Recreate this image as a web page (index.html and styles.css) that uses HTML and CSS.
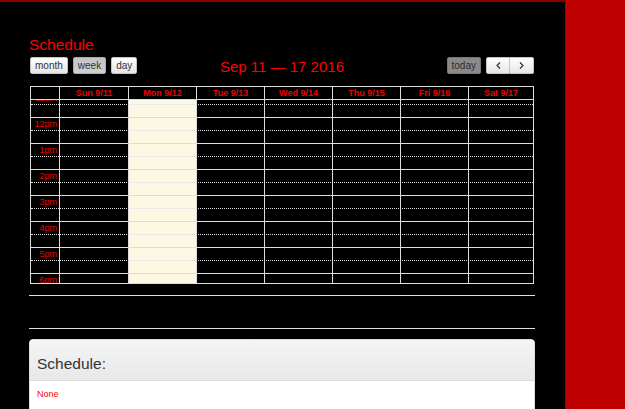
FILE: index.html
```html
<!DOCTYPE html>
<html>
<head>
<meta charset="utf-8">
<link rel="stylesheet" href="styles.css">
</head>
<body>
<div class="frame">
  <h1 class="title">Schedule</h1>
  <div class="toolbar">
    <div class="group left">
      <button class="btn">month</button>
      <button class="btn active">week</button>
      <button class="btn">day</button>
    </div>
    <h2 class="range">Sep 11 — 17 2016</h2>
    <div class="group right">
      <button class="btn disabled">today</button>
      <div class="pair">
        <button class="btn half first"><svg width="5" height="7" viewBox="0 0 5 7"><path d="M4 0.5 L1 3.5 L4 6.5" fill="none" stroke="#333" stroke-width="1.2"/></svg></button>
        <button class="btn half last"><svg width="5" height="7" viewBox="0 0 5 7"><path d="M1 0.5 L4 3.5 L1 6.5" fill="none" stroke="#333" stroke-width="1.2"/></svg></button>
      </div>
    </div>
  </div>

  <div class="cal">
    <div class="cal-head">
      <div class="hcell axis"></div>
      <div class="hcell">Sun 9/11</div>
      <div class="hcell">Mon 9/12</div>
      <div class="hcell">Tue 9/13</div>
      <div class="hcell">Wed 9/14</div>
      <div class="hcell">Thu 9/15</div>
      <div class="hcell">Fri 9/16</div>
      <div class="hcell">Sat 9/17</div>
    </div>
    <div class="cal-body">
      <div class="slots">
        <div class="col c1"></div>
        <div class="col c2"></div>
        <div class="col c3 today"></div>
        <div class="col c4"></div>
        <div class="col c5"></div>
        <div class="col c6"></div>
        <div class="col c7"></div>
        <div class="col c8"></div>
        <div class="slats">
          <div class="slot major"><span class="lbl">11am</span></div><div class="slot minor"></div>
          <div class="slot major"><span class="lbl">12pm</span></div><div class="slot minor"></div>
          <div class="slot major"><span class="lbl">1pm</span></div><div class="slot minor"></div>
          <div class="slot major"><span class="lbl">2pm</span></div><div class="slot minor"></div>
          <div class="slot major"><span class="lbl">3pm</span></div><div class="slot minor"></div>
          <div class="slot major"><span class="lbl">4pm</span></div><div class="slot minor"></div>
          <div class="slot major"><span class="lbl">5pm</span></div><div class="slot minor"></div>
          <div class="slot major"><span class="lbl">6pm</span></div><div class="slot minor"></div>
        </div>
      </div>
    </div>
  </div>

  <hr class="rule first-rule">
  <hr class="rule second-rule">

  <div class="panel">
    <div class="panel-head"><h3 class="panel-title">Schedule:</h3></div>
    <div class="panel-body">None</div>
  </div>
</div>
</body>
</html>
```

FILE: styles.css
```css
html, body {
  margin: 0;
  padding: 0;
}
body {
  background: #be0000;
  font-family: "Liberation Sans", Arial, sans-serif;
  overflow: hidden;
}
.frame {
  box-sizing: border-box;
  width: 566px;
  height: 409px;
  background: #000;
  border-top: 2px solid #8a0000;
  border-right: 1px solid #a00000;
  padding: 34px 30px 0 29px;
  overflow: hidden;
}
.title {
  margin: 0;
  font-size: 15.5px;
  line-height: 18px;
  font-weight: normal;
  color: #ff0000;
}
.toolbar {
  margin-top: 3px;
  display: grid;
  grid-template-columns: 1fr auto 1fr;
  align-items: start;
}
.group {
  display: flex;
  gap: 5px;
}
.group.left {
  margin-left: 1px;
}
.group.right {
  justify-self: end;
  margin-right: 1px;
}
.btn {
  box-sizing: border-box;
  height: 17px;
  margin: 0;
  padding: 0 4px;
  font-family: "Liberation Sans", Arial, sans-serif;
  font-size: 10px;
  line-height: 15px;
  color: #333;
  background: linear-gradient(#ffffff, #e6e6e6);
  border: 1px solid #c4c4c4;
  border-radius: 2px;
  display: flex;
  align-items: center;
  justify-content: center;
}
.btn.active {
  background: linear-gradient(#c4c4c4, #cfcfcf);
  border-color: #aaa;
}
.btn.disabled {
  background: #8a8a8a;
  border-color: #777;
  color: #2a2a2a;
}
.pair {
  display: flex;
}
.btn.half {
  width: 24px;
  padding: 0;
}
.btn.first {
  border-radius: 2px 0 0 2px;
}
.btn.last {
  border-radius: 0 2px 2px 0;
  border-left: 0;
}
.range {
  margin: 0;
  padding-top: 1px;
  font-size: 15px;
  line-height: 17px;
  font-weight: normal;
  color: #ff0000;
  white-space: nowrap;
}
.cal {
  margin: 11px 0 0 1px;
  width: 504px;
  box-sizing: border-box;
  border: 1px solid #ddd;
}
.cal-head,
.slots {
  display: grid;
  grid-template-columns: 28px 69px repeat(5, 68px) 65px;
}
.cal-head {
  border-bottom: 1px solid #ddd;
}
.hcell {
  height: 12px;
  font-size: 9px;
  line-height: 12px;
  font-weight: bold;
  color: #ee0000;
  text-align: center;
  border-left: 1px solid #ddd;
  white-space: nowrap;
}
.hcell.axis {
  border-left: 0;
}
.cal-body {
  height: 183px;
  overflow: hidden;
}
.slots {
  margin-top: -9px;
}
.col {
  grid-row: 1;
  border-left: 1px solid #ddd;
}
.c1 { grid-column: 1; border-left: 0; }
.c2 { grid-column: 2; }
.c3 { grid-column: 3; }
.c4 { grid-column: 4; }
.c5 { grid-column: 5; }
.c6 { grid-column: 6; }
.c7 { grid-column: 7; }
.c8 { grid-column: 8; }
.col.today {
  background: #fcf8e3;
}
.slats {
  grid-row: 1;
  grid-column: 1 / -1;
}
.slot {
  height: 12px;
  border-top: 1px solid #ddd;
}
.slot.minor {
  border-top: 1px dotted #ddd;
}
.lbl {
  display: block;
  box-sizing: border-box;
  width: 28px;
  padding: 1px 2px 0 0;
  text-align: right;
  font-size: 9px;
  line-height: 10px;
  color: #ee0000;
}
.rule {
  margin: 0;
  border: 0;
  height: 1px;
  background: #ddd;
}
.first-rule {
  margin-top: 11px;
}
.second-rule {
  margin-top: 32px;
}
.panel {
  margin-top: 10px;
  border: 1px solid #ddd;
  border-radius: 4px 4px 0 0;
  background: #fff;
  overflow: hidden;
}
.panel-head {
  background: linear-gradient(#f5f5f5, #e8e8e8);
  border-bottom: 1px solid #ddd;
  padding: 15px 7px 8px 7px;
}
.panel-title {
  margin: 0;
  font-size: 15.5px;
  line-height: 17px;
  font-weight: normal;
  color: #333;
}
.panel-body {
  padding: 8px 7px 20px 7px;
  font-size: 9px;
  line-height: 11px;
  color: #ff0000;
}
```
